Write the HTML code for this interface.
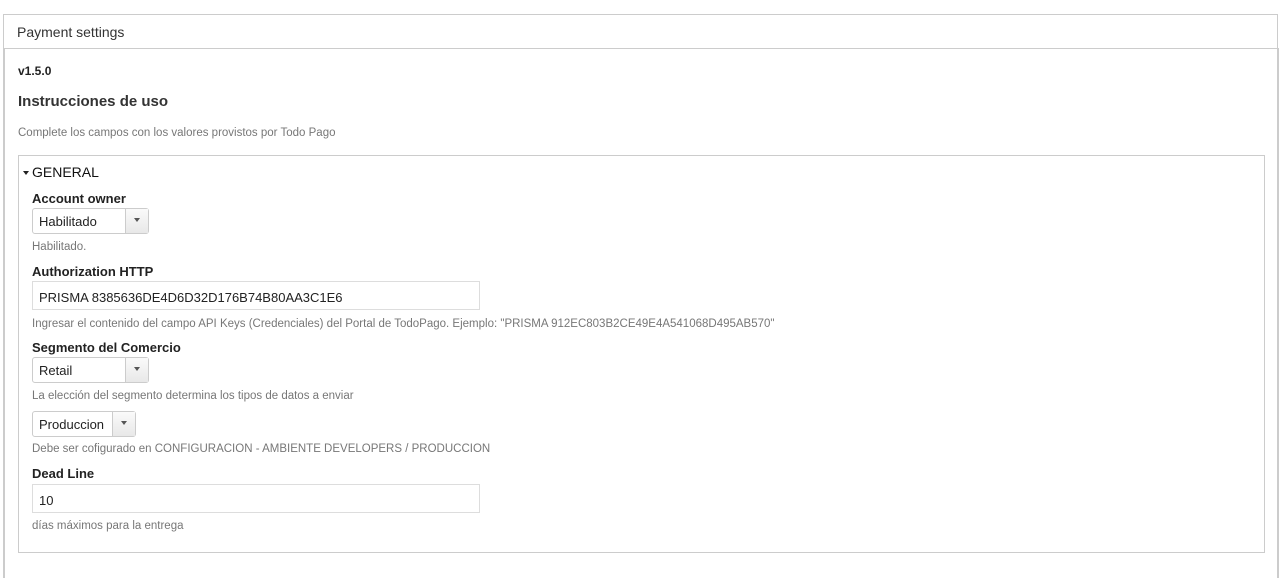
<!DOCTYPE html>
<html><head><style>
body{margin:0;width:1280px;height:569px;background:#fff;font-family:"Liberation Sans",sans-serif;position:relative;overflow:hidden}
.a{position:absolute;white-space:nowrap}
.lbl{font-weight:bold;font-size:13px;color:#222;left:32px}
.help{font-size:11.5px;color:#777;left:32px}
.sel{position:absolute;left:32px;height:24px;border:1px solid #ccc;border-radius:3px;box-sizing:border-box;background:#fff;font-size:13px;color:#222}
.sel span{position:absolute;left:6px;top:5px}
.sel i{position:absolute;right:0;top:0;width:22px;height:22px;border-left:1px solid #ccc;background:linear-gradient(#fafafa,#e8e8e8)}
.sel i:after{content:"";position:absolute;left:8px;top:9px;border:3.5px solid transparent;border-top:4px solid #555}
.inp{position:absolute;left:32px;width:448px;height:29px;border:1px solid #ddd;box-sizing:border-box;font-size:13px;color:#222;padding:8px 6px}
</style></head><body>
<div class="a" style="left:3px;top:14px;width:1273px;height:33px;border:1px solid #ccc;border-bottom:1px solid #ccc"></div>
<div class="a" style="left:17px;top:24px;font-size:14px;color:#333">Payment settings</div>
<div class="a" style="left:3px;top:48px;width:1272px;height:530px;border-left:2px solid #ccc;border-right:2px solid #ccc"></div>
<div class="a" style="left:18px;top:64px;font-size:12px;font-weight:bold;color:#222">v1.5.0</div>
<div class="a" style="left:18px;top:93px;font-size:15px;font-weight:bold;color:#333">Instrucciones de uso</div>
<div class="a" style="left:18px;top:127px;font-size:11.5px;color:#777">Complete los campos con los valores provistos por Todo Pago</div>
<div class="a" style="left:18px;top:155px;width:1245px;height:396px;border:1px solid #ccc"></div>
<div class="a" style="left:23px;top:171px;border:3px solid transparent;border-top:4px solid #222"></div>
<div class="a" style="left:32px;top:164px;font-size:14px;color:#111">GENERAL</div>
<div class="a lbl" style="top:191px">Account owner</div>
<div class="sel" style="top:208px;width:117px;height:26px"><span>Habilitado</span><i style="height:24px"></i></div>
<div class="a help" style="top:241px">Habilitado.</div>
<div class="a lbl" style="top:264px">Authorization HTTP</div>
<div class="inp" style="top:281px">PRISMA 8385636DE4D6D32D176B74B80AA3C1E6</div>
<div class="a help" style="top:318px">Ingresar el contenido del campo API Keys (Credenciales) del Portal de TodoPago. Ejemplo: "PRISMA 912EC803B2CE49E4A541068D495AB570"</div>
<div class="a lbl" style="top:340px">Segmento del Comercio</div>
<div class="sel" style="top:357px;width:117px;height:26px"><span>Retail</span><i style="height:24px"></i></div>
<div class="a help" style="top:390px">La elección del segmento determina los tipos de datos a enviar</div>
<div class="sel" style="top:411px;width:104px;height:26px"><span>Produccion</span><i style="height:24px"></i></div>
<div class="a help" style="top:443px">Debe ser cofigurado en CONFIGURACION - AMBIENTE DEVELOPERS / PRODUCCION</div>
<div class="a lbl" style="top:466px">Dead Line</div>
<div class="inp" style="top:484px">10</div>
<div class="a help" style="top:520px">días máximos para la entrega</div>
</body></html>
